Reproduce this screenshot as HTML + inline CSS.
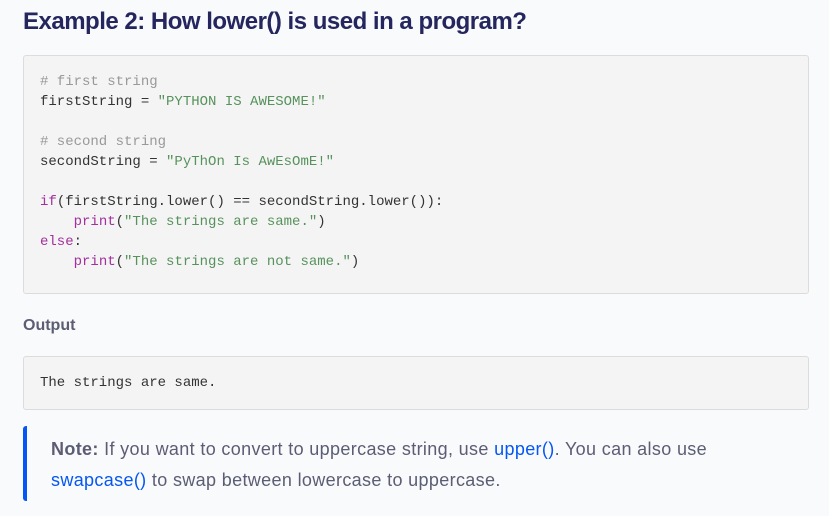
<!DOCTYPE html>
<html><head><style>
body{margin:0;background:#f9fafc;width:829px;height:516px;overflow:hidden;font-family:"Liberation Sans",sans-serif;}
h2{position:absolute;left:23px;top:8px;margin:0;font-size:24px;font-weight:bold;color:#25265e;letter-spacing:-0.5px}
.code{position:absolute;left:23px;width:786px;background:#f4f4f4;border:1px solid #dcdcdc;border-radius:3px;box-sizing:border-box;}
pre{margin:0;font-family:"Liberation Mono",monospace;font-size:14px;line-height:20px;color:#333;}
.c{color:#999}.s{color:#57925c}.k{color:#a2309d}
.out{position:absolute;left:23px;top:317px;font-size:16px;font-weight:bold;color:#5c5d74}
.note{position:absolute;left:23px;top:426px;height:75px;width:786px;border-left:4px solid #0556f3;border-radius:3px;box-sizing:border-box;padding:8px 0 0 24px;font-size:18px;line-height:31px;color:#5c5d74;letter-spacing:0.35px}
.note a{color:#0556f3;text-decoration:none}
</style></head><body>
<h2>Example 2: How lower() is used in a program?</h2>
<div class="code" style="top:55px;height:239px;padding:16px 0 0 16px"><pre><span class="c"># first string</span>
firstString = <span class="s">"PYTHON IS AWESOME!"</span>

<span class="c"># second string</span>
secondString = <span class="s">"PyThOn Is AwEsOmE!"</span>

<span class="k">if</span>(firstString.lower() == secondString.lower()):
    <span class="k">print</span>(<span class="s">"The strings are same."</span>)
<span class="k">else</span>:
    <span class="k">print</span>(<span class="s">"The strings are not same."</span>)</pre></div>
<div class="out">Output</div>
<div class="code" style="top:356px;height:54px;padding:16px 0 0 16px"><pre>The strings are same.</pre></div>
<div class="note"><b>Note:</b> If you want to convert to uppercase string, use <a>upper()</a>. You can also use<br><a>swapcase()</a> to swap between lowercase to uppercase.</div>
</body></html>
